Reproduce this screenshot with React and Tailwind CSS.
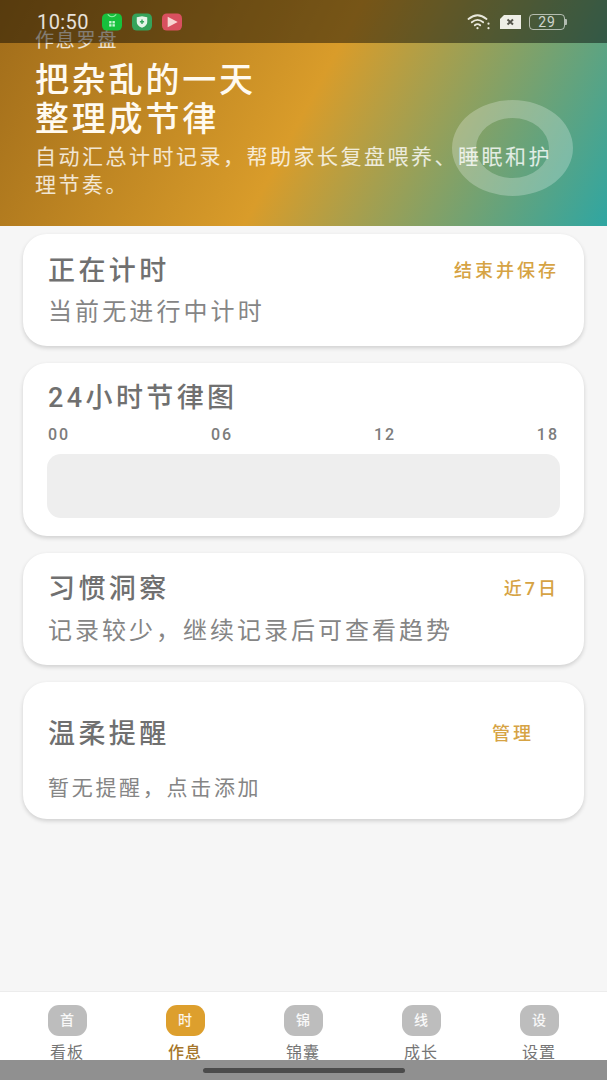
const cjk = { fontFamily: '"Roboto", "Noto Sans CJK SC", sans-serif' };

function Card({ title, action, actionClass = "", className = "", children }) {
  return (
    <section className={`mx-[23px] rounded-[24px] bg-white shadow-[0_2px_4px_rgba(0,0,0,0.16)] px-[25px] ${className}`}>
      <div className="flex items-center justify-between">
        <h2 className="text-[27px] leading-[32px] font-medium tracking-[3.4px] text-[#707070]">{title}</h2>
        {action && <span className={`text-[18px] leading-[22px] font-medium tracking-[3px] text-[#d6a344] ${actionClass}`}>{action}</span>}
      </div>
      {children}
    </section>
  );
}

function NavItem({ glyph, label, active }) {
  return (
    <div className="flex w-[118px] flex-col items-center">
      <div className={`flex h-[31px] w-[39px] items-center justify-center rounded-[11px] text-[14px] font-medium text-white/90 ${active ? "bg-[#dd9f2d]" : "bg-[#bdbdbd]"}`}>
        {glyph}
      </div>
      <span className={`mt-[7px] text-[16px] leading-[20px] tracking-[1px] ${active ? "font-medium text-[#a5762a]" : "text-[#757575]"}`}>{label}</span>
    </div>
  );
}

export default function App() {
  return (
    <div className="relative flex h-[1080px] w-[607px] flex-col overflow-hidden bg-[#f6f6f6]" style={cjk}>
      <header className="relative h-[226px] shrink-0 overflow-hidden bg-[linear-gradient(118deg,#a06c1a_0%,#d99c2a_50%,#2fa6a2_100%)] px-[35px] pt-[32px] text-white">
        <p className="text-[19px] leading-[18px] tracking-[1.8px] text-white/80">作息罗盘</p>
        <h1 className="mt-[11px] text-[34px] leading-[39px] font-medium tracking-[2.8px] text-[#fffaf0]">把杂乱的一天<br />整理成节律</h1>
        <p className="mt-[4px] text-[21px] leading-[28px] tracking-[2.5px] text-white/80">自动汇总计时记录，帮助家长复盘喂养、睡眠和护理节奏。</p>
        <div className="absolute left-[452px] top-[100px] h-[96px] w-[121px] rounded-[50%] border-x-[24px] border-y-[18px] border-white/25" />
      </header>

      <main className="flex flex-1 flex-col gap-[17px] pt-[8px]">
        <Card title="正在计时" action="结束并保存" className="h-[112px] pt-[21px]">
          <p className="mt-[10px] text-[24px] leading-[30px] tracking-[3.1px] text-[#858585]">当前无进行中计时</p>
        </Card>
        <Card title="24小时节律图" className="h-[173px] pt-[19px]">
          <div className="mt-[11px] flex justify-between text-[16px] leading-[20px] font-medium tracking-[2px] text-[#7c7c7c]">
            <span>00</span><span>06</span><span>12</span><span>18</span>
          </div>
          <div className="mt-[9px] -mx-[1px] h-[64px] rounded-[14px] bg-[#eeeeee]" />
        </Card>
        <Card title="习惯洞察" action="近7日" className="h-[112px] pt-[20px]">
          <p className="mt-[11px] text-[24px] leading-[30px] tracking-[3px] text-[#858585]">记录较少，继续记录后可查看趋势</p>
        </Card>
        <Card title="温柔提醒" action="管理" actionClass="mr-[25px]" className="h-[137px] pt-[36px]">
          <p className="mt-[24px] text-[21px] leading-[28px] tracking-[2.7px] text-[#858585]">暂无提醒，点击添加</p>
        </Card>
      </main>

      <nav className="flex h-[89px] shrink-0 border-t border-[#ececec] bg-white pl-[8px] pt-[13px]">
        <NavItem glyph="首" label="看板" />
        <NavItem glyph="时" label="作息" active />
        <NavItem glyph="锦" label="锦囊" />
        <NavItem glyph="线" label="成长" />
        <NavItem glyph="设" label="设置" />
      </nav>

      {/* system status bar over the hero */}
      <div className="absolute inset-x-0 top-0 flex h-[43px] items-center bg-black/45 pl-[37px] pr-[40px] text-white/85">
        <span className="text-[20px] leading-[20px] tracking-[0.4px]" style={{ fontFamily: '"Roboto", sans-serif' }}>10:50</span>
        <div className="ml-[13px] flex gap-[10px]">
          <svg width="20" height="18" viewBox="0 0 21 18">
            <rect width="21" height="18" rx="5" fill="#17c13d" />
            <path d="M6 1 Q10.5 6 15 1" fill="none" stroke="#8ff0a5" strokeWidth="1.2" />
            <rect x="7.5" y="8" width="2.5" height="2.5" fill="#c9f7d3" /><rect x="11" y="8" width="2.5" height="2.5" fill="#c9f7d3" />
            <rect x="7.5" y="11.3" width="2.5" height="2.5" fill="#c9f7d3" /><rect x="11" y="11.3" width="2.5" height="2.5" fill="#c9f7d3" />
          </svg>
          <svg width="20" height="18" viewBox="0 0 21 18">
            <rect width="21" height="18" rx="5" fill="#35a35b" />
            <path d="M5 4 L10.5 3 L16 4 V9 Q16 13 10.5 15 Q5 13 5 9 Z" fill="#e6f5ea" />
            <path d="M10.5 6.5 V11 M8.3 8.8 H12.7" stroke="#35a35b" strokeWidth="1.5" />
          </svg>
          <svg width="20" height="18" viewBox="0 0 21 18">
            <rect width="21" height="18" rx="5" fill="#d9505f" />
            <path d="M6 3.5 L16.5 9 L6 14.5 Z" fill="#f7d5d2" />
          </svg>
        </div>
        <div className="ml-auto flex items-center gap-[8px]">
          <svg width="25" height="18" viewBox="0 0 25 18" fill="none" stroke="#e9e8dc" strokeWidth="1.8" strokeLinecap="round">
            <path d="M1.5 6 Q10.5 -1.5 19.5 6" />
            <path d="M4.8 9.3 Q10.5 4.4 16.2 9.3" />
            <path d="M7.8 12.3 Q10.5 10 13.2 12.3" />
            <circle cx="10.5" cy="15.2" r="1.1" fill="#e9e8dc" stroke="none" />
            <circle cx="21.5" cy="10.7" r="1.1" fill="#e9e8dc" stroke="none" />
            <circle cx="21.5" cy="15.2" r="1.1" fill="#e9e8dc" stroke="none" />
          </svg>
          <svg width="21" height="14" viewBox="0 0 21 14">
            <path d="M4 0 H21 V14 H0 V4 Z" fill="#eeeee6" />
            <path d="M7.5 4.5 L13 9.5 M13 4.5 L7.5 9.5" stroke="#55554a" strokeWidth="2" />
          </svg>
          <div className="flex items-center">
            <div className="flex h-[16px] w-[36px] items-center justify-center rounded-[4px] border border-white/60 text-[14px] leading-none tracking-[0.8px] text-white/75">29</div>
            <div className="h-[6px] w-[2px] rounded-r-[1px] bg-white/60" />
          </div>
        </div>
      </div>

      {/* gesture bar over the tab labels */}
      <div className="absolute inset-x-0 bottom-0 flex h-[20px] items-center justify-center bg-[#909090]">
        <div className="h-[5px] w-[202px] rounded-full bg-[#4b4b4b]" />
      </div>
    </div>
  );
}
